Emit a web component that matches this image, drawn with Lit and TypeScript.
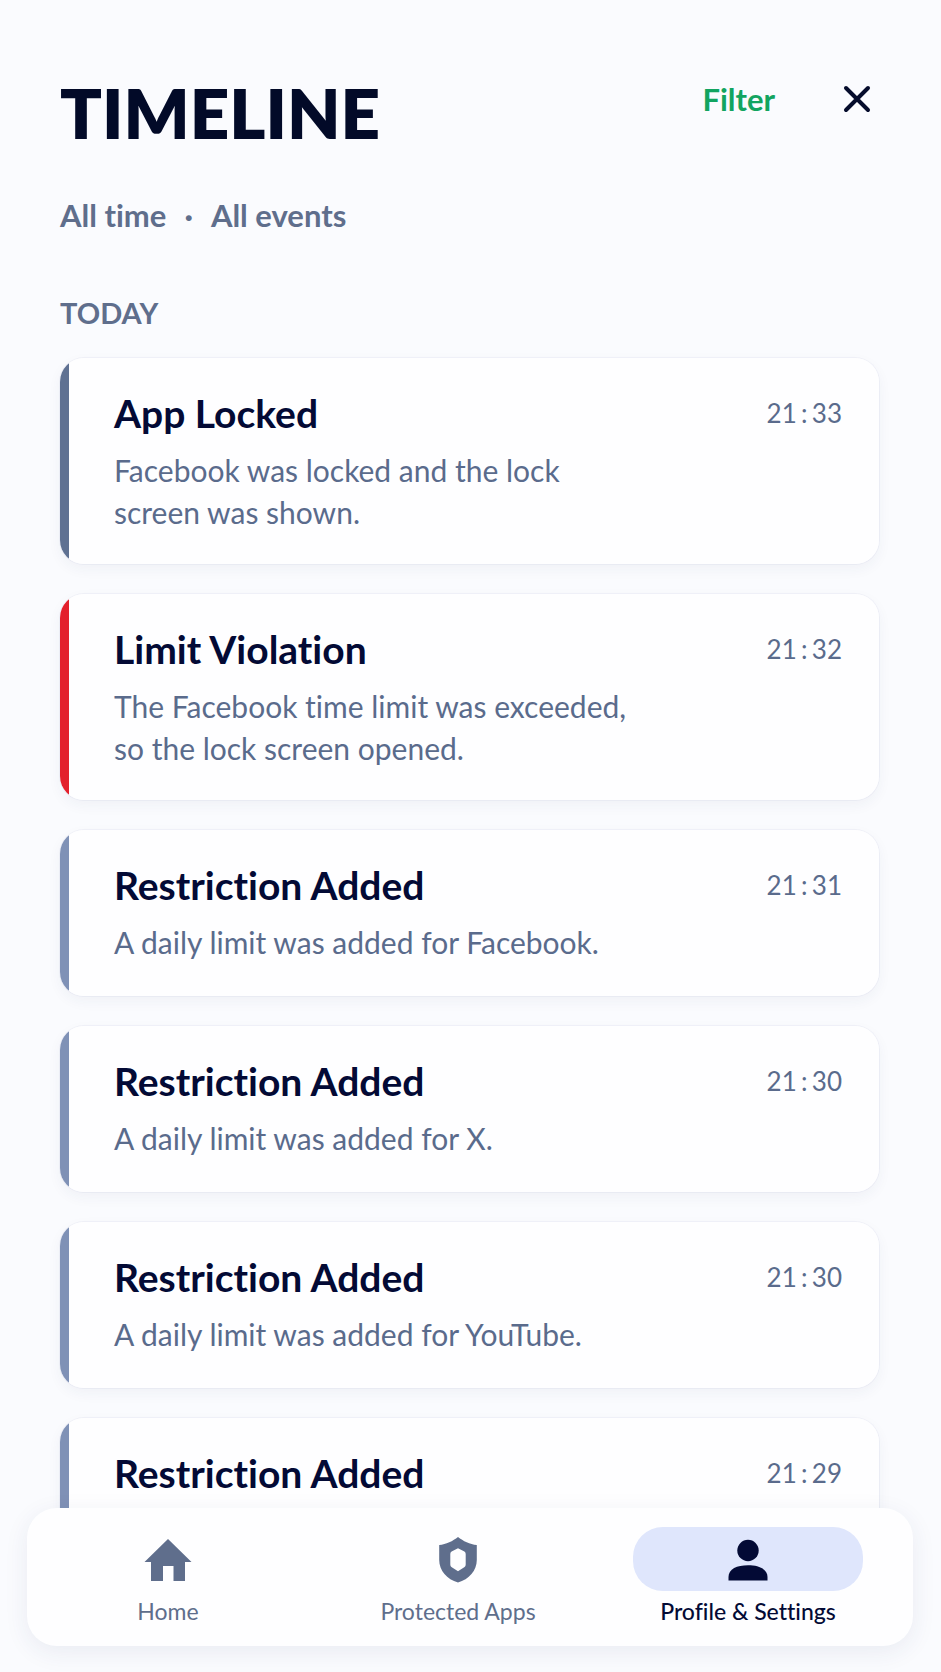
import { LitElement, html, css, svg } from "lit";
import { customElement, property } from "lit/decorators.js";
import { classMap } from "lit/directives/class-map.js";

type Tone = "locked" | "violation" | "restriction";

interface TimelineEvent {
  title: string;
  time: string;
  tone: Tone;
  detail?: string;
}

const EVENTS: TimelineEvent[] = [
  { title: "App Locked", time: "21:33", tone: "locked", detail: "Facebook was locked and the lock screen was shown." },
  { title: "Limit Violation", time: "21:32", tone: "violation", detail: "The Facebook time limit was exceeded, so the lock screen opened." },
  { title: "Restriction Added", time: "21:31", tone: "restriction", detail: "A daily limit was added for Facebook." },
  { title: "Restriction Added", time: "21:30", tone: "restriction", detail: "A daily limit was added for X." },
  { title: "Restriction Added", time: "21:30", tone: "restriction", detail: "A daily limit was added for YouTube." },
  { title: "Restriction Added", time: "21:29", tone: "restriction" },
];

const ICONS = {
  home: svg`<path d="M24 4 47.500 27H41V46H29.500V31H19V46H7V27H0.500Z"/>`,
  shield: svg`<path fill-rule="evenodd" d="M24 2C29 6 36 9.500 42.800 10V25C42.800 35.500 35 44.500 24 47.500C13 44.500 5.200 35.500 5.200 25V10C12 9.500 19 6 24 2ZM24 13.300 17.600 16.600Q16.300 17.400 16.300 19V29.500Q16.300 31.200 17.400 32L24 36.300 30.600 32Q31.700 31.200 31.700 29.500V19Q31.700 17.400 30.400 16.600Z"/>`,
  person: svg`<circle cx="24" cy="15.500" r="10.700"/><path d="M4.500 45.500V42C4.500 34 13 30.300 24 30.300S43.500 34 43.500 42V45.500Z"/>`,
};

@customElement("timeline-card")
export class TimelineCard extends LitElement {
  @property({ attribute: false }) event!: TimelineEvent;

  static styles = css`
    :host {
      display: block;
    }
    .card {
      --stripe: #7f91b6;
      box-sizing: border-box;
      display: flex;
      justify-content: space-between;
      min-height: 166px;
      padding: 31px 37px 31px 54px;
      border-radius: 24px;
      background: linear-gradient(to right, var(--stripe) 9px, #fefeff 9px);
      box-shadow: 0 0 0 1px rgba(70, 85, 150, 0.05), 0 5px 14px rgba(40, 55, 100, 0.05);
    }
    .locked {
      --stripe: #5f7192;
    }
    .violation {
      --stripe: #e3202c;
    }
    .title {
      margin: 0 0 12px;
      font-size: 39px;
      line-height: 48px;
      font-weight: 700;
      color: #030a35;
    }
    .detail {
      margin: 0;
      max-width: 520px;
      font-size: 30px;
      line-height: 42px;
      color: #5a6b8c;
    }
    .time {
      font-size: 26px;
      line-height: 48px;
      color: #5a6b8c;
      font-variant-numeric: tabular-nums;
      white-space: nowrap;
    }
    .colon {
      display: inline-block;
      width: 1ch;
      text-align: center;
    }
  `;

  render() {
    const { title, time, tone, detail } = this.event;
    const [hours, minutes] = time.split(":");
    return html`<article class=${classMap({ card: true, [tone]: true })}>
      <div>
        <h3 class="title">${title}</h3>
        ${detail ? html`<p class="detail">${detail}</p>` : null}
      </div>
      <time class="time" datetime=${time}>${hours}<span class="colon">:</span>${minutes}</time>
    </article>`;
  }
}

@customElement("app-root")
export class AppRoot extends LitElement {
  static styles = css`
    :host {
      display: block;
      position: relative;
      height: 100vh;
      overflow: hidden;
      background: #fafbfe;
      font-family: Lato, "Noto Sans", sans-serif;
      font-variant-ligatures: none;
      color: #030a35;
    }
    .screen {
      box-sizing: border-box;
      height: 100%;
      overflow-y: auto;
      scrollbar-width: none;
      padding: 69px 62px 80px 60px;
    }
    .header {
      display: flex;
      justify-content: space-between;
      align-items: flex-start;
    }
    .heading {
      margin: 0;
      font-size: 69px;
      line-height: 88px;
      font-weight: 800;
      color: #020a28;
    }
    .actions {
      display: flex;
      align-items: center;
      gap: 60px;
      padding-top: 6px;
    }
    button {
      border: 0;
      padding: 0;
      background: none;
      font: inherit;
      color: inherit;
      cursor: pointer;
    }
    .filter {
      font-size: 31px;
      line-height: 48px;
      font-weight: 700;
      color: #12a460;
    }
    .close {
      display: flex;
      width: 44px;
      height: 48px;
      align-items: center;
      justify-content: center;
    }
    .close svg {
      width: 28px;
      height: 28px;
    }
    .summary {
      margin: 37px 0 0;
      font-size: 31px;
      line-height: 42px;
      font-weight: 700;
      color: #5f6e8c;
      display: flex;
      gap: 18px;
    }
    .day {
      margin: 56px 0 24px;
      font-size: 29px;
      line-height: 42px;
      font-weight: 700;
      color: #5f6e8c;
    }
    .list {
      display: flex;
      flex-direction: column;
      gap: 30px;
    }
    .nav {
      position: absolute;
      left: 27px;
      right: 28px;
      bottom: 26px;
      box-sizing: border-box;
      display: grid;
      grid-template-columns: repeat(3, 1fr);
      gap: 60px;
      padding: 19px 50px 20px 26px;
      border-radius: 30px;
      background: #fefeff;
      box-shadow: 0 6px 24px rgba(40, 55, 100, 0.08);
    }
    .tab {
      display: flex;
      flex-direction: column;
      align-items: center;
      gap: 5px;
      font-size: 23px;
      line-height: 30px;
      color: #5f6e8c;
      text-decoration: none;
      white-space: nowrap;
    }
    .pill {
      display: flex;
      align-items: center;
      justify-content: center;
      align-self: stretch;
      height: 64px;
      border-radius: 30px;
    }
    .pill svg {
      width: 48px;
      height: 48px;
      fill: currentColor;
    }
    .active {
      font-weight: 500;
      color: #030a35;
    }
    .active .pill {
      background: #dfe6fc;
    }
  `;

  private tab(label: string, icon: keyof typeof ICONS, active = false) {
    return html`<a class=${classMap({ tab: true, active })} href="#${icon}" aria-current=${active ? "page" : "false"}>
      <span class="pill"><svg viewBox="0 0 48 48" aria-hidden="true">${ICONS[icon]}</svg></span>
      <span>${label}</span>
    </a>`;
  }

  render() {
    return html`
      <main class="screen">
        <header class="header">
          <h1 class="heading">TIMELINE</h1>
          <div class="actions">
            <button class="filter" type="button">Filter</button>
            <button class="close" type="button" aria-label="Close">
              <svg viewBox="0 0 28 28" fill="none" stroke="#050c2c" stroke-width="4" stroke-linecap="round" aria-hidden="true">
                <path d="M3 3 25 25M25 3 3 25" />
              </svg>
            </button>
          </div>
        </header>
        <p class="summary"><span>All time</span><span>·</span><span>All events</span></p>
        <h2 class="day">TODAY</h2>
        <section class="list">${EVENTS.map((event) => html`<timeline-card .event=${event}></timeline-card>`)}</section>
      </main>
      <nav class="nav">
        ${this.tab("Home", "home")} ${this.tab("Protected Apps", "shield")}
        ${this.tab("Profile & Settings", "person", true)}
      </nav>
    `;
  }
}
